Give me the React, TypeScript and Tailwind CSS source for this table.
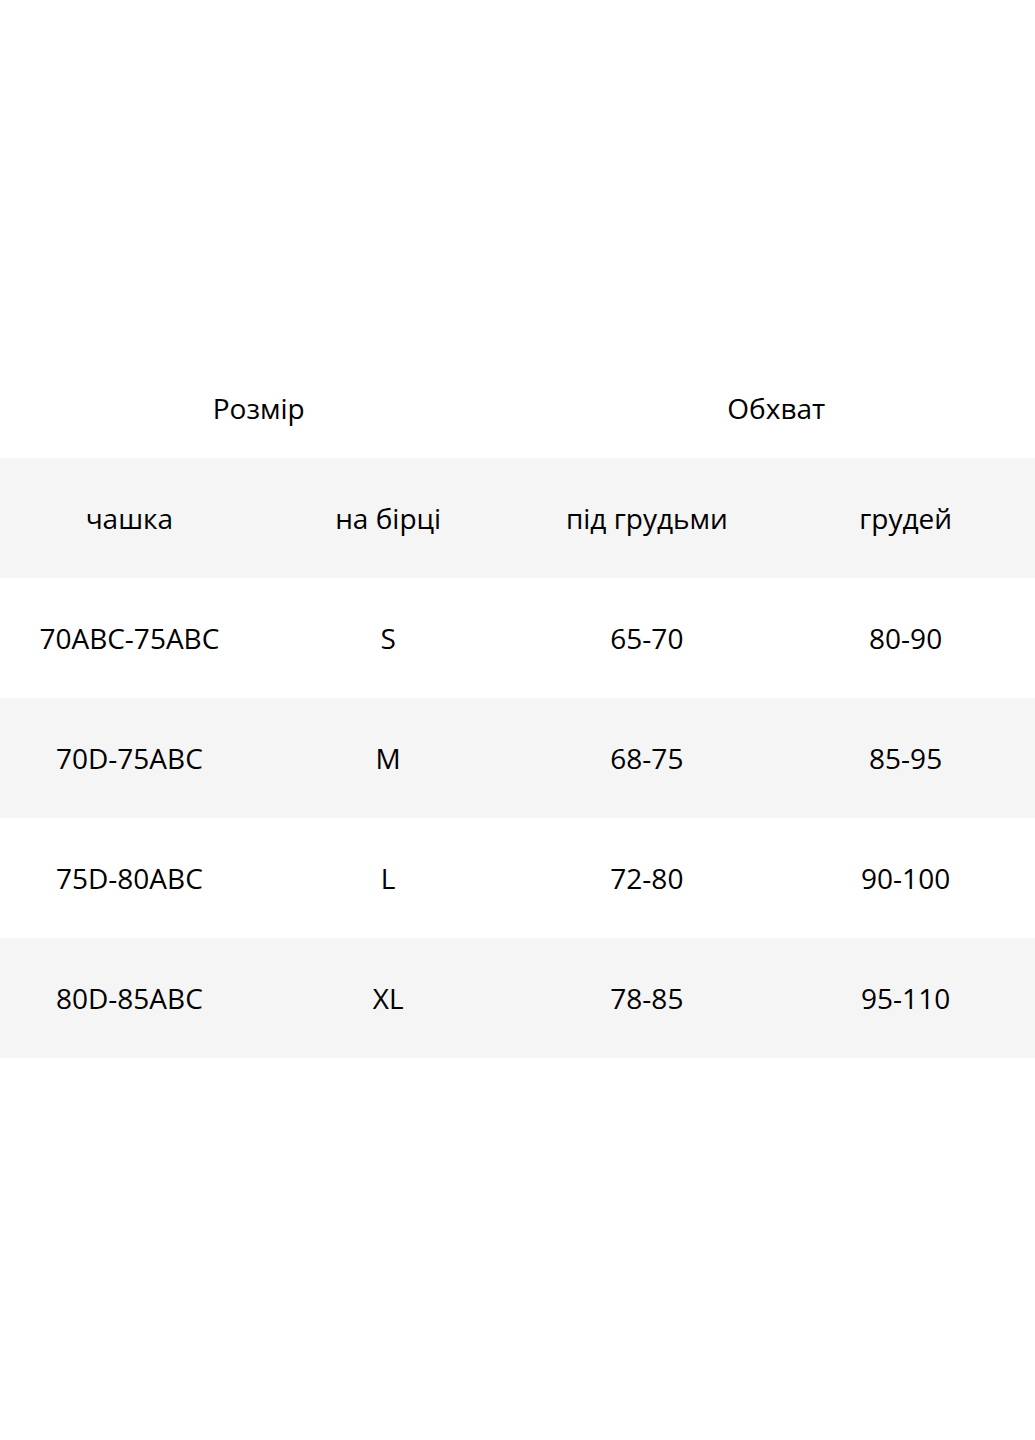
const rows = [
  ['70ABC-75ABC', 'S', '65-70', '80-90'],
  ['70D-75ABC', 'M', '68-75', '85-95'],
  ['75D-80ABC', 'L', '72-80', '90-100'],
  ['80D-85ABC', 'XL', '78-85', '95-110'],
]

export default function App() {
  return (
    <div
      className="min-h-[1440px] w-full bg-white text-[28px] text-black pt-[358px]"
      style={{ fontFamily: '"Open Sans", "Noto Sans", sans-serif' }}
    >
      {/* top header */}
      <div className="grid grid-cols-2 h-[100px] items-center text-center">
        <div>Розмір</div>
        <div>Обхват</div>
      </div>

      {/* column labels */}
      <div className="grid grid-cols-4 h-[120px] items-center text-center bg-[#f5f5f5]">
        <div>чашка</div>
        <div>на бірці</div>
        <div>під грудьми</div>
        <div>грудей</div>
      </div>

      {rows.map((r, i) => (
        <div
          key={r[0]}
          className={
            'grid grid-cols-4 h-[120px] items-center text-center ' +
            (i % 2 === 1 ? 'bg-[#f5f5f5]' : 'bg-white')
          }
        >
          {r.map((c, j) => (
            <div key={j}>{c}</div>
          ))}
        </div>
      ))}
    </div>
  )
}
